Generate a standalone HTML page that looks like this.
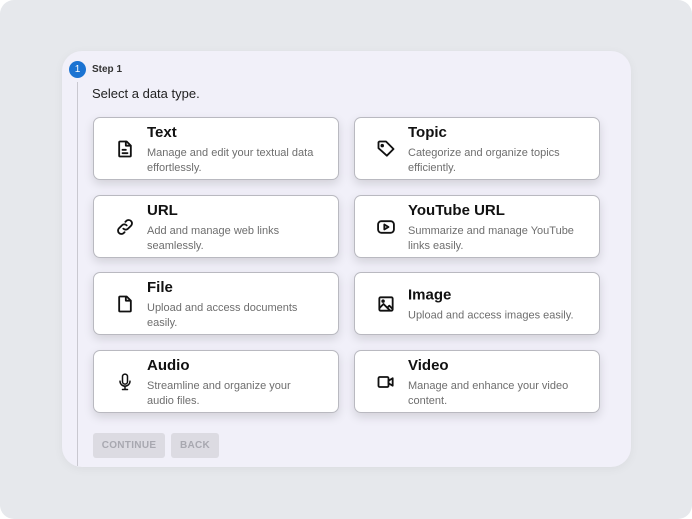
<!DOCTYPE html>
<html><head><meta charset="utf-8"><style>
*{box-sizing:border-box;margin:0;padding:0}
html,body{width:692px;height:519px;background:#fff;overflow:hidden}
body{font-family:"Liberation Sans",sans-serif}
.bg{position:absolute;left:0;top:0;width:692px;height:519px;background:#e6e8ec;border-radius:14px}
.panel{position:absolute;left:62px;top:51px;width:569px;height:416px;background:#f1f0f9;border-radius:20px;box-shadow:0 2px 10px rgba(0,0,0,.05)}
.circ{position:absolute;left:69px;top:61px;width:17px;height:17px;border-radius:50%;background:#1b73d2;color:#fff;font-size:10px;text-align:center;line-height:17px}
.vline{position:absolute;left:77px;top:82px;width:1px;height:384px;background:#c9c8d0}
.step{position:absolute;left:92px;top:64px;font-size:10px;font-weight:bold;color:#333}
.sel{position:absolute;left:92px;top:86px;font-size:13px;color:#222}
.card{position:absolute;width:246px;height:63px;background:#fff;border:1px solid #b9b9c0;border-radius:7px;box-shadow:0 4px 10px rgba(0,0,0,.13)}
.card svg{position:absolute;left:21px;top:50%;margin-top:-10px;width:20px;height:20px}
.tx{position:absolute;left:53px;right:4px;top:calc(50% + 1.5px);transform:translateY(-50%)}
.t{font-size:15px;font-weight:bold;color:#111;line-height:17px;margin-bottom:5px}
.d{font-size:11px;color:#6e6e6e;line-height:15px}
.btn{position:absolute;top:433px;height:25px;background:#dcdbe2;border-radius:3px;color:#a8a8b0;font-size:10px;font-weight:bold;text-align:center;line-height:25px;letter-spacing:.3px}
</style></head><body>
<div class="bg"></div>
<div class="panel"></div>
<div class="vline"></div>
<div class="circ">1</div>
<div class="step">Step 1</div>
<div class="sel">Select a data type.</div>

<div class="card" style="left:93px;top:117px">
<svg viewBox="0 0 24 24" fill="none" stroke="#111" stroke-width="2.2" stroke-linejoin="round" stroke-linecap="round"><path d="M6 3h8l5 5v12a1 1 0 0 1-1 1H6a1 1 0 0 1-1-1V4a1 1 0 0 1 1-1z"/><path d="M13 3v5h5"/><path d="M9 13h4M9 17h6"/></svg>
<div class="tx"><div class="t">Text</div><div class="d">Manage and edit your textual data<br>effortlessly.</div></div></div>

<div class="card" style="left:354px;top:117px">
<svg viewBox="0 0 24 24" fill="none" stroke="#111" stroke-width="2.2" stroke-linejoin="round"><path d="M3 4v7l10 9 8-8-9-9H4z"/><circle cx="7.5" cy="8" r="1" fill="#111"/></svg>
<div class="tx"><div class="t">Topic</div><div class="d">Categorize and organize topics<br>efficiently.</div></div></div>

<div class="card" style="left:93px;top:195px">
<svg viewBox="0 0 24 24" fill="none" stroke="#111" stroke-width="2.2" stroke-linecap="round"><path d="M10 14a4 4 0 0 0 5.7 0l3.5-3.5a4 4 0 0 0-5.7-5.7l-1 1"/><path d="M14 10a4 4 0 0 0-5.7 0l-3.5 3.5a4 4 0 0 0 5.7 5.7l1-1"/></svg>
<div class="tx"><div class="t">URL</div><div class="d">Add and manage web links<br>seamlessly.</div></div></div>

<div class="card" style="left:354px;top:195px">
<svg viewBox="0 0 24 24" fill="none" stroke="#111" stroke-width="2.2" stroke-linejoin="round"><rect x="2.5" y="5" width="19" height="14" rx="4"/><path d="M10 9v6l5-3z"/></svg>
<div class="tx"><div class="t">YouTube URL</div><div class="d">Summarize and manage YouTube<br>links easily.</div></div></div>

<div class="card" style="left:93px;top:272px">
<svg viewBox="0 0 24 24" fill="none" stroke="#111" stroke-width="2.2" stroke-linejoin="round"><path d="M6 3h8l5 5v12a1 1 0 0 1-1 1H6a1 1 0 0 1-1-1V4a1 1 0 0 1 1-1z"/><path d="M13 3v5h5"/></svg>
<div class="tx"><div class="t">File</div><div class="d">Upload and access documents<br>easily.</div></div></div>

<div class="card" style="left:354px;top:272px">
<svg viewBox="0 0 24 24" fill="none" stroke="#111" stroke-width="2.2" stroke-linejoin="round"><rect x="4" y="4" width="16" height="16" rx="1.5"/><path d="M4 17l5-5 8 8"/><path d="M14 16l2-2 4 4"/><circle cx="8.5" cy="8.5" r="1" fill="#111"/></svg>
<div class="tx"><div class="t">Image</div><div class="d">Upload and access images easily.</div></div></div>

<div class="card" style="left:93px;top:350px">
<svg viewBox="0 0 24 24" fill="none" stroke="#111" stroke-width="1.8" stroke-linecap="round"><rect x="9" y="2.5" width="6" height="12" rx="3"/><path d="M6 11a6 6 0 0 0 12 0M12 17v4M9 21h6"/></svg>
<div class="tx"><div class="t">Audio</div><div class="d">Streamline and organize your<br>audio files.</div></div></div>

<div class="card" style="left:354px;top:350px">
<svg viewBox="0 0 24 24" fill="none" stroke="#111" stroke-width="2.2" stroke-linejoin="round"><rect x="3" y="6" width="12" height="12" rx="1.5"/><path d="M15 10.5l5-3v9l-5-3z"/></svg>
<div class="tx"><div class="t">Video</div><div class="d">Manage and enhance your video<br>content.</div></div></div>

<div class="btn" style="left:93px;width:72px">CONTINUE</div>
<div class="btn" style="left:171px;width:48px">BACK</div>
</body></html>
